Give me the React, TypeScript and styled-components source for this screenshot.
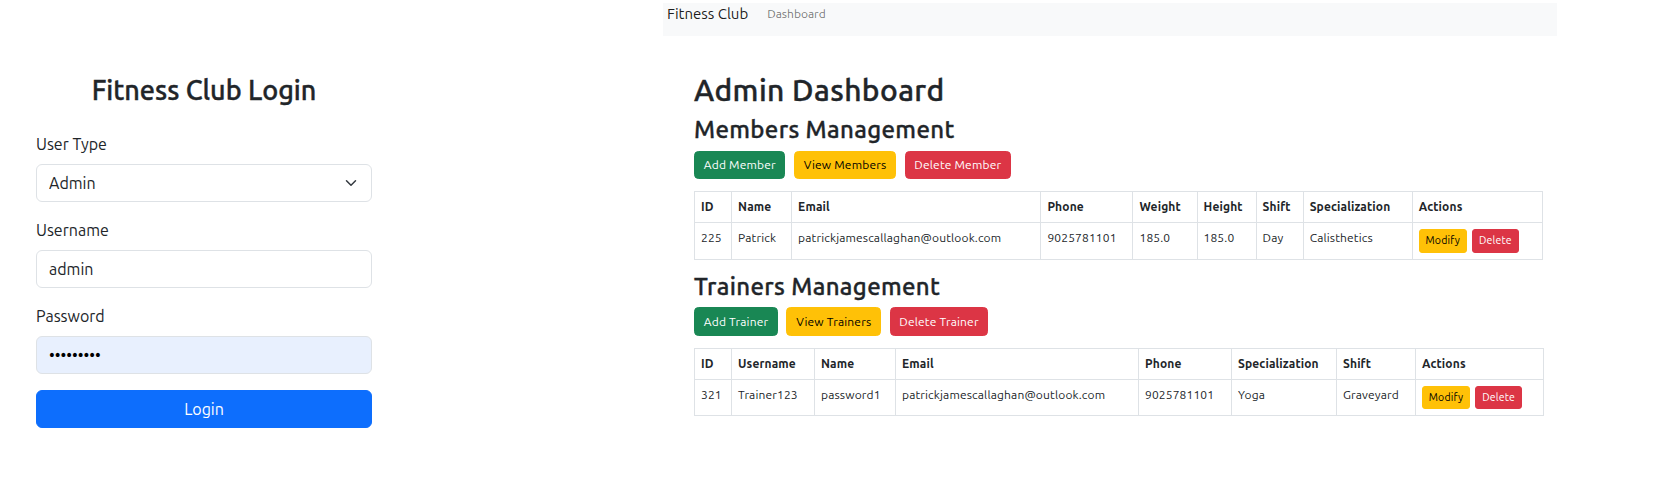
import React from "react";
import styled, { createGlobalStyle } from "styled-components";

const GlobalStyle = createGlobalStyle`
  html, body { margin: 0; padding: 0; background: #fff; }
  body {
    font-family: Ubuntu, "Noto Sans", "Liberation Sans", sans-serif;
    color: #212529;
    -webkit-font-smoothing: antialiased;
  }
  * { box-sizing: border-box; }
`;

const headingFont = `Ubuntu, "Open Sans", "Noto Sans", sans-serif`;

const Page = styled.div`
  display: flex;
  align-items: flex-start;
  gap: 255px;
  width: 1667px;
`;

/* ---------- Login ---------- */

const LoginPane = styled.div`
  width: 408px;
  padding: 74px 36px 0;
  display: flex;
  flex-direction: column;
`;

const LoginTitle = styled.h2`
  margin: 0 0 24px;
  font-family: ${headingFont};
  font-size: 27px;
  line-height: 33.6px;
  font-weight: 500;
  -webkit-text-stroke: 0.4px currentColor;
  text-align: center;
`;

const Field = styled.div`
  display: flex;
  flex-direction: column;
  margin-bottom: 16px;
`;

const Label = styled.label`
  font-size: 16px;
  line-height: 24px;
  margin-bottom: 8px;
`;

const SelectWrap = styled.div`
  position: relative;
  display: flex;
`;

const Select = styled.select`
  appearance: none;
  width: 100%;
  height: 38px;
  padding: 6px 36px 6px 12px;
  font: inherit;
  font-size: 16px;
  line-height: 24px;
  color: #212529;
  background: #fff;
  border: 1px solid #dee2e6;
  border-radius: 6px;
`;

const Chevron = styled.svg`
  position: absolute;
  right: 13px;
  top: 13px;
  width: 16px;
  height: 12px;
  pointer-events: none;
`;

const Input = styled.input<{ $autofill?: boolean }>`
  width: 100%;
  height: 38px;
  padding: 6px 12px;
  font: inherit;
  font-size: 16px;
  line-height: 24px;
  color: ${(p) => (p.$autofill ? "#000" : "#212529")};
  background: ${(p) => (p.$autofill ? "#e8f0fe" : "#fff")};
  border: 1px solid #dee2e6;
  border-radius: 6px;
  outline: none;
`;

const LoginButton = styled.button`
  height: 38px;
  width: 100%;
  font: inherit;
  font-size: 16px;
  line-height: 24px;
  color: #fff;
  background: #0d6efd;
  border: 1px solid #0d6efd;
  border-radius: 6px;
  padding: 6px 12px;
`;

/* ---------- Dashboard ---------- */

const Dash = styled.div`
  width: 894px;
  margin-top: 3px;
  display: flex;
  flex-direction: column;
`;

const NavBar = styled.nav`
  height: 33px;
  background: #f8f9fa;
  display: flex;
  align-items: flex-start;
  padding-left: 4px;
`;

const Brand = styled.span`
  font-size: 15px;
  line-height: 22.5px;
  color: rgba(0, 0, 0, 0.9);
  margin-right: 19px;
`;

const NavLink = styled.span`
  font-size: 12px;
  line-height: 22.5px;
  color: rgba(0, 0, 0, 0.55);
`;

const Content = styled.main`
  width: 849px;
  margin-left: 31px;
  padding-top: 36px;
`;

const H1 = styled.h1`
  margin: 0 0 8px;
  font-family: ${headingFont};
  font-size: 30px;
  line-height: 36px;
  font-weight: 500;
  letter-spacing: 0.4px;
  -webkit-text-stroke: 0.4px currentColor;
`;

const H2 = styled.h2`
  margin: 0 0 6px;
  font-family: ${headingFont};
  font-size: 24px;
  line-height: 28.8px;
  font-weight: 500;
  letter-spacing: 0.35px;
  -webkit-text-stroke: 0.35px currentColor;
`;

const ButtonRow = styled.div`
  display: flex;
  gap: 8.5px;
  margin-bottom: 12px;
`;

const variants = {
  success: { bg: "#198754", fg: "#fff" },
  warning: { bg: "#ffc107", fg: "#000" },
  danger: { bg: "#dc3545", fg: "#fff" },
};

type Variant = keyof typeof variants;

const Btn = styled.button<{ $v: Variant }>`
  font: inherit;
  font-size: 12px;
  line-height: 18px;
  letter-spacing: 0.18px;
  padding: 4.25px 8.75px;
  border-radius: 4.5px;
  border: 1px solid ${(p) => variants[p.$v].bg};
  background: ${(p) => variants[p.$v].bg};
  color: ${(p) => variants[p.$v].fg};
`;

const SmallBtn = styled.button<{ $v: Variant }>`
  font: inherit;
  font-size: 10.5px;
  line-height: 15.75px;
  letter-spacing: 0.2px;
  padding: 2.75px 5.75px;
  border-radius: 3px;
  border: 1px solid ${(p) => variants[p.$v].bg};
  background: ${(p) => variants[p.$v].bg};
  color: ${(p) => variants[p.$v].fg};
  & + & { margin-left: 5.5px; }
`;

const Table = styled.table`
  width: 849px;
  table-layout: fixed;
  border-collapse: collapse;
  margin-bottom: 13px;
  font-size: 12px;
  line-height: 18px;
  letter-spacing: 0.15px;
  color: #212529;
  vertical-align: top;
`;

const Col = styled.col<{ $w: number }>`
  width: ${(p) => p.$w}px;
`;

const Th = styled.th`
  text-align: left;
  font-weight: 700;
  padding: 6px;
  border: 1px solid #dee2e6;
  white-space: nowrap;
  overflow: hidden;
`;

const Td = styled.td`
  padding: 6px;
  border: 1px solid #dee2e6;
  white-space: nowrap;
  vertical-align: top;
`;

type Section = {
  title: string;
  buttons: [string, Variant][];
  cols: [string, number][];
  row: string[];
};

const sections: Section[] = [
  {
    title: "Members Management",
    buttons: [
      ["Add Member", "success"],
      ["View Members", "warning"],
      ["Delete Member", "danger"],
    ],
    cols: [
      ["ID", 37],
      ["Name", 60],
      ["Email", 249],
      ["Phone", 92],
      ["Weight", 64],
      ["Height", 59],
      ["Shift", 47],
      ["Specialization", 109],
      ["Actions", 130],
    ],
    row: ["225", "Patrick", "patrickjamescallaghan@outlook.com", "9025781101", "185.0", "185.0", "Day", "Calisthetics"],
  },
  {
    title: "Trainers Management",
    buttons: [
      ["Add Trainer", "success"],
      ["View Trainers", "warning"],
      ["Delete Trainer", "danger"],
    ],
    cols: [
      ["ID", 37],
      ["Username", 83],
      ["Name", 81],
      ["Email", 243],
      ["Phone", 93],
      ["Specialization", 105],
      ["Shift", 79],
      ["Actions", 128],
    ],
    row: ["321", "Trainer123", "password1", "patrickjamescallaghan@outlook.com", "9025781101", "Yoga", "Graveyard"],
  },
];

export default function App() {
  return (
    <>
      <GlobalStyle />
      <Page>
        <LoginPane>
          <LoginTitle>Fitness Club Login</LoginTitle>
          <Field>
            <Label>User Type</Label>
            <SelectWrap>
              <Select defaultValue="Admin">
                <option>Admin</option>
                <option>Member</option>
                <option>Trainer</option>
              </Select>
              <Chevron viewBox="0 0 16 16">
                <path d="m2 5 6 6 6-6" fill="none" stroke="#343a40" strokeWidth="2" strokeLinecap="round" strokeLinejoin="round" />
              </Chevron>
            </SelectWrap>
          </Field>
          <Field>
            <Label>Username</Label>
            <Input type="text" defaultValue="admin" />
          </Field>
          <Field>
            <Label>Password</Label>
            <Input type="password" defaultValue="admin1234" $autofill />
          </Field>
          <LoginButton>Login</LoginButton>
        </LoginPane>

        <Dash>
          <NavBar>
            <Brand>Fitness Club</Brand>
            <NavLink>Dashboard</NavLink>
          </NavBar>
          <Content>
            <H1>Admin Dashboard</H1>
            {sections.map((s) => (
              <section key={s.title}>
                <H2>{s.title}</H2>
                <ButtonRow>
                  {s.buttons.map(([label, v]) => (
                    <Btn key={label} $v={v}>{label}</Btn>
                  ))}
                </ButtonRow>
                <Table>
                  <colgroup>
                    {s.cols.map(([name, w]) => (
                      <Col key={name} $w={w} />
                    ))}
                  </colgroup>
                  <thead>
                    <tr>
                      {s.cols.map(([name]) => (
                        <Th key={name}>{name}</Th>
                      ))}
                    </tr>
                  </thead>
                  <tbody>
                    <tr>
                      {s.row.map((c, i) => (
                        <Td key={i}>{c}</Td>
                      ))}
                      <Td>
                        <SmallBtn $v="warning">Modify</SmallBtn>
                        <SmallBtn $v="danger">Delete</SmallBtn>
                      </Td>
                    </tr>
                  </tbody>
                </Table>
              </section>
            ))}
          </Content>
        </Dash>
      </Page>
    </>
  );
}
